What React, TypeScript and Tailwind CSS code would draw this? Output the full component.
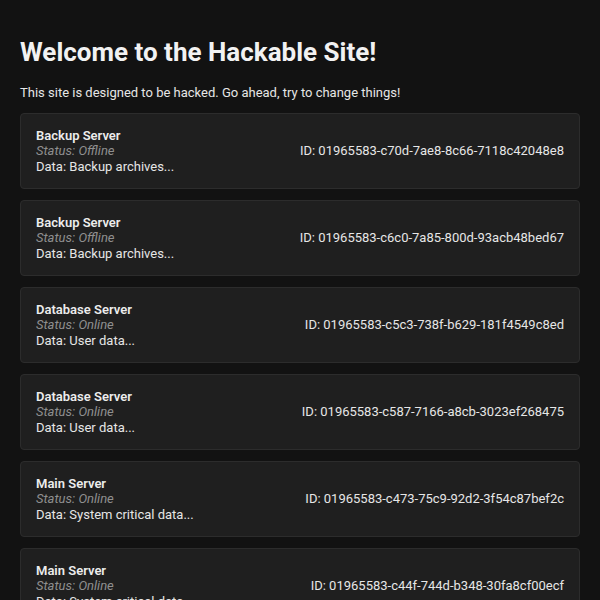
const servers = [
  { name: 'Backup Server', online: false, data: 'Backup archives...', id: '01965583-c70d-7ae8-8c66-7118c42048e8' },
  { name: 'Backup Server', online: false, data: 'Backup archives...', id: '01965583-c6c0-7a85-800d-93acb48bed67' },
  { name: 'Database Server', online: true, data: 'User data...', id: '01965583-c5c3-738f-b629-181f4549c8ed' },
  { name: 'Database Server', online: true, data: 'User data...', id: '01965583-c587-7166-a8cb-3023ef268475' },
  { name: 'Main Server', online: true, data: 'System critical data...', id: '01965583-c473-75c9-92d2-3f54c87bef2c' },
  { name: 'Main Server', online: true, data: 'System critical data...', id: '01965583-c44f-744d-b348-30fa8cf00ecf' },
];

export default function App() {
  return (
    <div className="min-h-screen bg-[#121212] p-[20px] text-[13px] text-[#e6e6e6] font-['Roboto',sans-serif]">
      <h1 className="my-[17px] text-[26px] font-bold leading-[30.5px] text-[#f2f2f2]">
        Welcome to the Hackable Site!
      </h1>
      <p className="mb-[13px] leading-[15.3px]">
        This site is designed to be hacked. Go ahead, try to change things!
      </p>
      <div className="flex flex-col gap-[11px]">
        {servers.map((s) => (
          <div
            key={s.id}
            className="flex items-center justify-between rounded-[4px] border border-[#2c2c2c] bg-[#1f1f1f] px-[15px] pt-[14px] pb-[13.5px] leading-[15.5px]"
          >
            <div className="flex flex-col">
              <span className="font-semibold text-[#ececec]">{s.name}</span>
              <span className="italic text-[#8f8f8f]">Status: {s.online ? 'Online' : 'Offline'}</span>
              <span>Data: {s.data}</span>
            </div>
            <span>ID: {s.id}</span>
          </div>
        ))}
      </div>
    </div>
  );
}
